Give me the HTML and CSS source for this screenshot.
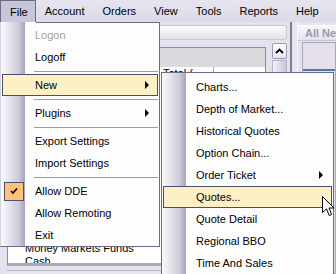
FILE: index.html
```html
<!DOCTYPE html>
<html lang="en">
<head>
<meta charset="UTF-8">
<meta name="viewport" content="width=device-width, initial-scale=1.0">
<title>Trading Desk - File Menu</title>
<link rel="stylesheet" href="styles.css">
</head>
<body>

<div class="app">
  <div class="menubar">
    <span class="bar-item open">File</span>
    <span class="bar-item">Account</span>
    <span class="bar-item">Orders</span>
    <span class="bar-item">View</span>
    <span class="bar-item">Tools</span>
    <span class="bar-item">Reports</span>
    <span class="bar-item">Help</span>
  </div>

  <div class="workspace">
    <div class="left-pane">
      <div class="toolstrip"></div>
      <div class="grid-area">
        <div class="grid">
          <div class="group-panel"></div>
          <div class="grid-header"><span class="col-head">Total (</span></div>
          <div class="grid-body">
            <div class="grid-row">Money Markets Funds</div>
            <div class="grid-row last">Cash</div>
          </div>
        </div>
        <div class="vscroll">
          <div class="scroll-btn">
            <svg width="9" height="6" viewBox="0 0 9 6"><path d="M1 5 L4.5 1.5 L8 5" fill="none" stroke="#000" stroke-width="1.8"/></svg>
          </div>
          <div class="scroll-track"></div>
        </div>
      </div>
      <div class="footer-box"></div>
    </div>
    <div class="splitter"></div>
    <div class="right-pane">
      <div class="pane-title">All News</div>
      <div class="news-box"><div class="news-line"></div></div>
    </div>
  </div>

  <!-- File menu dropdown -->
  <div class="menu file-menu">
    <div class="menu-item disabled">Logon</div>
    <div class="menu-item">Logoff</div>
    <div class="sep"></div>
    <div class="menu-item hot">New<span class="arrow"></span></div>
    <div class="sep"></div>
    <div class="menu-item">Plugins<span class="arrow"></span></div>
    <div class="sep"></div>
    <div class="menu-item">Export Settings</div>
    <div class="menu-item">Import Settings</div>
    <div class="sep"></div>
    <div class="menu-item"><span class="check"><svg width="18" height="17" viewBox="0 0 18 17"><path d="M6 8 L8 10 L12 5.5" fill="none" stroke="#000" stroke-width="1.7"/></svg></span>Allow DDE</div>
    <div class="menu-item">Allow Remoting</div>
    <div class="menu-item">Exit</div>
  </div>

  <!-- New submenu -->
  <div class="menu sub-menu">
    <div class="menu-item">Charts...</div>
    <div class="menu-item">Depth of Market...</div>
    <div class="menu-item">Historical Quotes</div>
    <div class="menu-item">Option Chain...</div>
    <div class="menu-item">Order Ticket<span class="arrow"></span></div>
    <div class="menu-item hot">Quotes...</div>
    <div class="menu-item">Quote Detail</div>
    <div class="menu-item">Regional BBO</div>
    <div class="menu-item">Time And Sales</div>
  </div>

  <svg class="cursor" width="13" height="21" viewBox="0 0 13 21">
    <path d="M0.5 0.5 L0.5 16.5 L4.5 12.8 L7.2 19.5 L9.6 18.5 L7 12 L12 12 Z" fill="#fff" stroke="#000" stroke-width="1"/>
  </svg>
</div>

</body>
</html>
```

FILE: styles.css
```css
* {
  box-sizing: border-box;
}
body {
  margin: 0;
  font-family: "Liberation Sans", Arial, sans-serif;
  font-size: 11px;
  color: #000;
  overflow: hidden;
}
.app {
  position: relative;
  width: 336px;
  height: 274px;
  overflow: hidden;
  background: #e4e2ed;
  display: flex;
  flex-direction: column;
}

/* menu bar */
.menubar {
  height: 22px;
  display: flex;
  align-items: stretch;
  background: linear-gradient(#e6e4ef, #dcdae8);
}
.bar-item {
  display: flex;
  align-items: center;
  padding: 0 9px;
}
.bar-item.open {
  padding: 0 7px 0 9px;
  background: #c8c7da;
  border: 1px solid #6b6b84;
  border-bottom: none;
  position: relative;
  z-index: 3;
}

/* work area behind the menus */
.workspace {
  flex: 1;
  display: flex;
  min-width: 0;
}
.left-pane {
  width: 290px;
  flex-shrink: 0;
  padding: 3px 3px 0 7px;
  display: flex;
  flex-direction: column;
}
.toolstrip {
  height: 15px;
  background: linear-gradient(#fbfbfd, #e2e2ea);
  border: 1px solid #c4c4d2;
  border-radius: 0 3px 3px 0;
}
.grid-area {
  margin-top: 3px;
  height: 223px;
  display: flex;
  gap: 6px;
}
.grid {
  flex: 1;
  margin-top: 4px;
  display: flex;
  flex-direction: column;
  border: 1px solid #8a8aa0;
  border-bottom: 3px solid #a9a9b6;
  background: #fff;
}
.group-panel {
  height: 19px;
  background: #dadade;
}
.grid-header {
  height: 13px;
  display: flex;
}
.col-head {
  width: 206px;
  padding-left: 155px;
  line-height: 13px;
  border-right: 1px solid #b0b0b0;
}
.grid-body {
  flex: 1;
  display: flex;
  flex-direction: column;
  justify-content: flex-end;
  overflow: hidden;
}
.grid-row {
  height: 13px;
  line-height: 13px;
  padding-left: 17px;
}
.grid-row.last {
  margin-bottom: -5px;
}
.vscroll {
  width: 15px;
  flex-shrink: 0;
  display: flex;
  flex-direction: column;
}
.scroll-btn {
  height: 16px;
  display: flex;
  align-items: center;
  justify-content: center;
  background: linear-gradient(#ffffff, #e6e6ee);
  border: 1px solid #9a9cb6;
  border-radius: 2px;
}
.scroll-track {
  flex: 1;
  margin-top: 1px;
  background: linear-gradient(to right, #f2f2f6, #c6c6d8);
  border: 1px solid #b4b4c6;
}
.footer-box {
  flex: 1;
  margin-top: 4px;
  border-top: 1px solid #b8b8c8;
  background: #e8e6f0;
}
.splitter {
  width: 7px;
  flex-shrink: 0;
  border-left: 2px solid #7c7c90;
  background: #e6e4ee;
}
.right-pane {
  flex: 1;
  min-width: 0;
  overflow: hidden;
  padding-top: 3px;
  display: flex;
  flex-direction: column;
  border-left: 1px solid #fafafc;
}
.pane-title {
  height: 16px;
  padding-left: 7px;
  line-height: 15px;
  font-weight: bold;
  color: #9a9aaa;
  white-space: nowrap;
  background: linear-gradient(#f6f6fa, #e4e2ec);
  border-top: 1px solid #fdfdff;
  border-bottom: 1px solid #c6c6d4;
}
.news-box {
  flex: 1;
  margin: 1px 0 0 4px;
  border: 1px solid #a8a8bc;
  background: #e6dfe9;
}
.news-line {
  margin-top: 26px;
  height: 2px;
  background: #4a78b8;
}

/* drop-down menus */
.menu {
  position: absolute;
  z-index: 2;
  background: linear-gradient(to right, #fbfbfd, #cacad9 75%, #a3a3bd) 0 0 / 24px 100% no-repeat, #fdfdfe;
}
.file-menu {
  left: 0;
  top: 22px;
  width: 160px;
  height: 225px;
  padding: 2px 1px 1px 1px;
  border: 1px solid #6b6b84;
  border-left-color: #d4d4e0;
  border-top: none;
}
.file-menu::before {
  content: '';
  position: absolute;
  top: 0;
  left: 35px;
  right: 0;
  height: 1px;
  background: #6b6b84;
}
.sub-menu {
  left: 161px;
  top: 72px;
  width: 173px;
  padding: 3px 1px;
  border: 1px solid #6b6b84;
}
.menu-item {
  height: 22px;
  display: flex;
  align-items: center;
  padding-left: 32px;
  border: 1px solid transparent;
  white-space: nowrap;
}
.menu-item.hot {
  background: #fdf0c5;
  border-color: #4e4e6c;
}
.menu-item.disabled {
  color: #a4a494;
}
.arrow {
  margin-left: auto;
  margin-right: 8px;
  width: 0;
  height: 0;
  border-left: 4px solid #000;
  border-top: 4px solid transparent;
  border-bottom: 4px solid transparent;
}
.check {
  width: 20px;
  height: 19px;
  margin-left: -31px;
  margin-right: 11px;
  background: #ffc27a;
  border: 1px solid #4e4e6c;
  display: flex;
}
.sep {
  margin: 3px 0 2px 32px;
  border-top: 1px solid #9c9cb4;
}

.cursor {
  position: absolute;
  left: 322px;
  top: 196px;
  z-index: 5;
}
```
